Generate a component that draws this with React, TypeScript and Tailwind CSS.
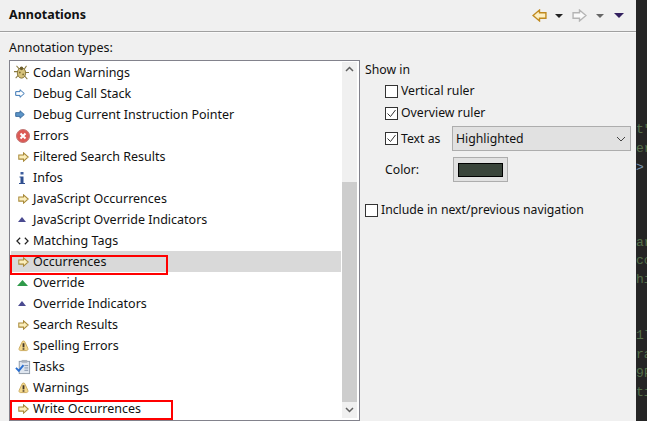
const font = { fontFamily: '"Noto Sans", sans-serif' };

function ArrowIcon({
  fill,
  stroke,
  dir = "right",
  w = 11,
  h = 10,
}: {
  fill: string;
  stroke: string;
  dir?: "left" | "right";
  w?: number;
  h?: number;
}) {
  return (
    <svg width={w} height={h} viewBox="0 0 14 12" preserveAspectRatio="none" className={dir === "left" ? "-scale-x-100" : ""}>
      <path d="M1 3.500H7V1l6 5-6 5V8.500H1z" fill={fill} stroke={stroke} strokeWidth="1.300" />
    </svg>
  );
}

function Warn() {
  return (
    <svg width="11" height="12" viewBox="0 0 12 13" className="ml-[2px]">
      <path d="M6 1c1 0 1.300.6 1.700 1.400l3 6.600c.5 1.200 0 2.500-1.400 2.500H2.700C1.300 11.500.8 10.200 1.300 9l3-6.600C4.700 1.600 5 1 6 1z" fill="#f5d98c" stroke="#c8a75a" />
      <rect x="5" y="3.500" width="2" height="4.500" fill="#40352a" />
      <rect x="5" y="9" width="2" height="1.500" fill="#40352a" />
    </svg>
  );
}

function Bug() {
  return (
    <svg width="15" height="15" viewBox="0 0 18 16" preserveAspectRatio="none" className="-ml-[1px]">
      <path d="M3 1l4 4M0 7h5M2 14l3-3M15 1l-3 4M18 8h-5M16 15l-4-4" stroke="#8a7a40" strokeWidth="1.200" />
      <ellipse cx="9" cy="8.500" rx="5" ry="5.500" fill="#d6c27a" stroke="#7d6c33" />
      <circle cx="9" cy="3.500" r="2" fill="#6b5c2a" />
      <circle cx="7" cy="8" r="1" fill="#7a6a30" />
      <circle cx="11" cy="10" r="1" fill="#7a6a30" />
    </svg>
  );
}

function ErrorIcon() {
  return (
    <svg width="14" height="14" viewBox="0 0 14 14" className="ml-[1px]">
      <circle cx="7" cy="7" r="6.500" fill="#dc5a55" stroke="#c27a78" />
      <path d="M4.500 4.500l5 5M9.500 4.500l-5 5" stroke="#fff" strokeWidth="2" />
    </svg>
  );
}

function Info() {
  return (
    <svg width="8" height="14" viewBox="0 0 8 14">
      <rect x="2.500" y="1" width="3" height="2.500" fill="#3f5f9f" />
      <path d="M1.500 5.500h4V12h1.500v1H1v-1h1.500V6.500h-1z" fill="#2f4f8f" />
    </svg>
  );
}

function Triangle({ fill, w = 8, h = 5 }: { fill: string; w?: number; h?: number }) {
  return (
    <svg width={w} height={h} viewBox="0 0 8 6" preserveAspectRatio="none">
      <path d="M4 0L8 6H0z" fill={fill} />
    </svg>
  );
}

function Tags() {
  return (
    <svg width="13" height="10" viewBox="0 0 14 10" fill="none" stroke="#222" strokeWidth="1.300" className="ml-[1px]">
      <path d="M4.500 1.500L1 5l3.500 3.500M9.500 1.500L13 5 9.500 8.500" />
    </svg>
  );
}

function TaskIcon() {
  return (
    <svg width="16" height="16" viewBox="0 0 17 17" className="ml-[1px]">
      <rect x="4.500" y="2.500" width="11" height="13" fill="#dfe6ef" stroke="#8e99a8" />
      <rect x="7" y="1" width="6" height="3" fill="#a9b2bd" />
      <path d="M10 7h4M10 9.500h4M10 12h4" stroke="#7f90a8" />
      <path d="M1 9.500l3 3 5-6" fill="none" stroke="#2a6fd0" strokeWidth="2" />
    </svg>
  );
}

const yellow = (
  <span className="ml-[2px] flex">
    <ArrowIcon fill="#fbeebc" stroke="#a98a3a" />
  </span>
);

const rows = [
  { icon: <Bug />, label: "Codan Warnings" },
  {
    icon: (
      <span className="-ml-[5px] flex">
        <ArrowIcon fill="#ffffff" stroke="#2f6fb0" w={10} h={9} />
      </span>
    ),
    label: "Debug Call Stack",
  },
  {
    icon: (
      <span className="-ml-[5px] flex">
        <ArrowIcon fill="#5b94c8" stroke="#3a6a9c" w={10} h={9} />
      </span>
    ),
    label: "Debug Current Instruction Pointer",
  },
  { icon: <ErrorIcon />, label: "Errors" },
  { icon: yellow, label: "Filtered Search Results" },
  { icon: <Info />, label: "Infos" },
  { icon: yellow, label: "JavaScript Occurrences" },
  { icon: <Triangle fill="#4a4a90" />, label: "JavaScript Override Indicators" },
  { icon: <Tags />, label: "Matching Tags" },
  { icon: yellow, label: "Occurrences", selected: true, mark: "top-[4px] w-[158px]" },
  { icon: <Triangle fill="#2f9a4a" w={11} h={6} />, label: "Override" },
  { icon: <Triangle fill="#4a4a90" />, label: "Override Indicators" },
  { icon: yellow, label: "Search Results" },
  { icon: <Warn />, label: "Spelling Errors" },
  { icon: <TaskIcon />, label: "Tasks" },
  { icon: <Warn />, label: "Warnings" },
  { icon: yellow, label: "Write Occurrences", mark: "top-[2px] w-[163px]" },
];

const codeLines = ["t\"", "er", ">", "", "", "", "ar", "co", "hi", "", "", "1l", "ra", "9F", "ti"];

function CheckBox({ checked }: { checked?: boolean }) {
  return (
    <span className="flex h-[13px] w-[13px] shrink-0 items-center justify-center border border-[#333] bg-white">
      {checked && (
        <svg width="11" height="11" viewBox="0 0 11 11" fill="none" stroke="#333" strokeWidth="1">
          <path d="M1.500 5.500l3 3 5-6.500" />
        </svg>
      )}
    </span>
  );
}

export default function App() {
  return (
    <div className="flex h-[421px] w-[647px] overflow-hidden bg-[#f0f0f0] text-[12.500px] text-[#111]" style={font}>
      <div className="flex w-[636px] flex-col">
        <header className="flex h-[32px] shrink-0 items-center justify-between border-b border-[#a0a0a0] pl-[9px] pr-[12px] shadow-[0_1px_0_#fafafa]">
          <h1 className="text-[12.500px] font-bold">Annotations</h1>
          <div className="flex items-center">
            <ArrowIcon fill="#fdf0c4" stroke="#c08a20" dir="left" w={15} h={13} />
            <span className="ml-[8px] h-0 w-0 border-x-[4px] border-t-[4px] border-x-transparent border-t-[#222]" />
            <span className="ml-[9px]">
              <ArrowIcon fill="#fafafa" stroke="#b5b5b5" w={15} h={13} />
            </span>
            <span className="ml-[9px] h-0 w-0 border-x-[4px] border-t-[4px] border-x-transparent border-t-[#666]" />
            <span className="ml-[10px] h-0 w-0 border-x-[5px] border-t-[5px] border-x-transparent border-t-[#33205f]" />
          </div>
        </header>

        <div className="flex min-h-0 flex-1 pl-[9px]">
          <div className="flex w-[351px] shrink-0 flex-col">
            <p className="mt-[7px] h-[21px] leading-[18px]">Annotation types:</p>
            <div className="flex h-[361px] shrink-0 border border-[#82828c] bg-white pl-[1px] pt-[1px]">
              <ul className="w-[330px] shrink-0">
                {rows.map((row) => (
                  <li
                    key={row.label}
                    className={`relative flex h-[21px] items-center ${row.selected ? "bg-[#d9d9d9]" : ""}`}
                  >
                    <span className="flex w-[22px] shrink-0 items-center justify-center">{row.icon}</span>
                    <span className="whitespace-nowrap pt-[2px]">{row.label}</span>
                    {row.mark && (
                      <span className={`absolute -left-[1px] h-[20px] border-2 border-[#ff0000] ${row.mark}`} />
                    )}
                  </li>
                ))}
              </ul>
              <div className="ml-[1px] flex h-[356px] w-[15px] shrink-0 flex-col bg-[#f0f0f0]">
                <div className="flex h-[14px] items-center justify-center">
                  <svg width="9" height="6" viewBox="0 0 9 6" fill="none" stroke="#606060" strokeWidth="1.500">
                    <path d="M1 5l3.500-3.500L8 5" />
                  </svg>
                </div>
                <div className="mt-[106px] h-[220px] bg-[#cdcdcd]" />
                <div className="flex flex-1 items-center justify-center">
                  <svg width="9" height="6" viewBox="0 0 9 6" fill="none" stroke="#606060" strokeWidth="1.500">
                    <path d="M1 1l3.500 3.500L8 1" />
                  </svg>
                </div>
              </div>
            </div>
          </div>

          <div className="ml-[5px] flex-1 text-[12.250px]">
            <p className="mt-[29px] h-[18px] leading-[18px]">Show in</p>
            <div className="pl-[20px]">
              <label className="mt-[4px] flex h-[16px] items-center gap-[3px]">
                <CheckBox /> <span className="pt-[1px]">Vertical ruler</span>
              </label>
              <label className="mt-[6px] flex h-[16px] items-center gap-[3px]">
                <CheckBox checked /> <span className="pt-[1px]">Overview ruler</span>
              </label>
              <div className="mt-[5px] flex h-[25px] items-center">
                <CheckBox checked />
                <span className="ml-[3px] w-[51px] pt-[2px]">Text as</span>
                <div className="flex h-[25px] w-[179px] items-center justify-between border border-[#adadad] bg-[#e1e1e1] pl-[3px] pr-[4px]">
                  <span className="pt-[2px]">Highlighted</span>
                  <svg width="10" height="6" viewBox="0 0 10 6" fill="none" stroke="#444" strokeWidth="1">
                    <path d="M1 1l4 4 4-4" />
                  </svg>
                </div>
              </div>
              <div className="mt-[6px] flex h-[25px] items-center">
                <span className="w-[68px] pt-[2px]">Color:</span>
                <div className="flex h-[25px] w-[55px] items-center justify-center border border-[#adadad] bg-[#e1e1e1]">
                  <span className="h-[14px] w-[45px] border border-black bg-[#39443a]" />
                </div>
              </div>
            </div>
            <label className="mt-[20px] flex h-[16px] items-center gap-[3px]">
              <CheckBox /> <span className="pt-[1px]">Include in next/previous navigation</span>
            </label>
          </div>
        </div>
      </div>

      <div className="w-[11px] shrink-0 overflow-hidden bg-[#252525] pt-[121px] font-['Liberation_Mono',monospace] text-[13px] leading-[18.750px] text-[#55704a]">
        {codeLines.map((line, i) => (
          <div key={i} className={`h-[18.750px] whitespace-pre ${line === ">" ? "text-[#7a93b0]" : ""}`}>
            {line}
          </div>
        ))}
      </div>
    </div>
  );
}
